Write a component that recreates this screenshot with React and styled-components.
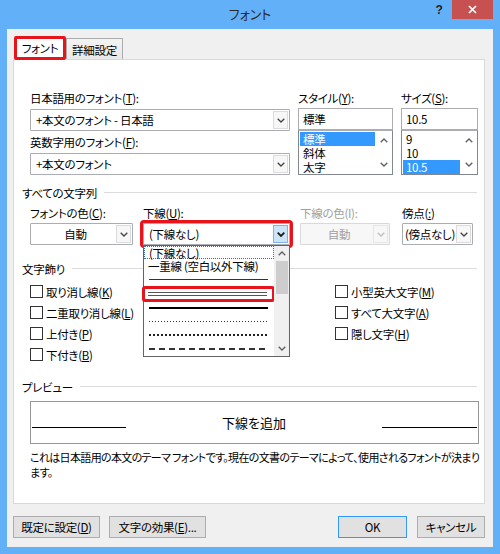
import React from 'react';
import styled, { createGlobalStyle } from 'styled-components';

const GlobalStyle = createGlobalStyle`
    html, body {
        margin: 0;
        padding: 0;
    }
    body {
        font-family: "Noto Sans CJK JP", "Noto Sans", sans-serif;
        font-size: 11.5px;
        letter-spacing: -0.3px;
        font-feature-settings: "palt";
        color: #000;
    }
    * {
        box-sizing: border-box;
    }
`;

const Chevron = ({ up, color = '#444', bold }) => (
    <svg width="8" height="5" viewBox="0 0 8 5">
        <polyline
            points={up ? '0.7,4.3 4,1 7.3,4.3' : '0.7,0.7 4,4 7.3,0.7'}
            fill="none"
            stroke={color}
            strokeWidth={bold ? 1.8 : 1.3}
        />
    </svg>
);

const App = () => {
    const styles = ['標準', '斜体', '太字'];
    const sizes = ['9', '10', '10.5'];
    const decorLeft = [
        ['取り消し線(', 'K', ')'],
        ['二重取り消し線(', 'L', ')'],
        ['上付き(', 'P', ')'],
        ['下付き(', 'B', ')']
    ];
    const decorRight = [
        ['小型英大文字(', 'M', ')'],
        ['すべて大文字(', 'A', ')'],
        ['隠し文字(', 'H', ')']
    ];
    const underlineSamples = ['single', 'double', 'thick', 'dotted', 'thickDotted', 'dashed'];

    return (
        <>
            <GlobalStyle />
            <Window>
                <TitleBar>
                    <span />
                    <Title>フォント</Title>
                    <Controls>
                        <HelpButton>?</HelpButton>
                        <CloseButton>
                            <svg width="9" height="9" viewBox="0 0 9 9">
                                <path d="M1 1 L8 8 M8 1 L1 8" stroke="#fff" strokeWidth="1.7" />
                            </svg>
                        </CloseButton>
                    </Controls>
                </TitleBar>

                <Client>
                    <TabStrip>
                        <Tab $active>フォント</Tab>
                        <Tab>詳細設定</Tab>
                    </TabStrip>

                    <Panel>
                        <FontsRow>
                            <FieldCol $w={260}>
                                <FieldLabel>日本語用のフォント(<u>T</u>):</FieldLabel>
                                <Combo>
                                    <ComboValue>+本文のフォント - 日本語</ComboValue>
                                    <ComboButton><Chevron /></ComboButton>
                                </Combo>
                                <FieldLabel>英数字用のフォント(<u>F</u>):</FieldLabel>
                                <Combo>
                                    <ComboValue>+本文のフォント</ComboValue>
                                    <ComboButton><Chevron /></ComboButton>
                                </Combo>
                            </FieldCol>

                            <FieldCol $w={95} $left={8} $gap={2}>
                                <FieldLabel>スタイル(<u>Y</u>):</FieldLabel>
                                <Picker>
                                    <TextBox>標準</TextBox>
                                    <ListBox>
                                        <ListItems>
                                            {styles.map((s, i) => (
                                                <ListItem key={s} $selected={i === 0}>{s}</ListItem>
                                            ))}
                                        </ListItems>
                                        <ListScroll>
                                            <Chevron up color="#606060" />
                                            <Chevron color="#606060" />
                                        </ListScroll>
                                    </ListBox>
                                </Picker>
                            </FieldCol>

                            <FieldCol $w={77} $left={8} $gap={2}>
                                <FieldLabel>サイズ(<u>S</u>):</FieldLabel>
                                <Picker>
                                    <TextBox>10.5</TextBox>
                                    <ListBox>
                                        <ListItems>
                                            {sizes.map((s, i) => (
                                                <ListItem key={s} $selected={i === 2}>{s}</ListItem>
                                            ))}
                                        </ListItems>
                                        <ListScroll>
                                            <Chevron up color="#606060" />
                                            <Chevron color="#606060" />
                                        </ListScroll>
                                    </ListBox>
                                </Picker>
                            </FieldCol>
                        </FontsRow>

                        <GroupHeader $top={10}>すべての文字列</GroupHeader>
                        <CharRow>
                            <FieldCol $w={103} $gap={2}>
                                <FieldLabel>フォントの色(<u>C</u>):</FieldLabel>
                                <Combo>
                                    <ComboValue $center>自動</ComboValue>
                                    <ComboButton><Chevron /></ComboButton>
                                </Combo>
                            </FieldCol>

                            <FieldCol $w={147} $left={10} $gap={2}>
                                <FieldLabel>下線(<u>U</u>):</FieldLabel>
                                <Combo $focused>
                                    <ComboValue>(下線なし)</ComboValue>
                                    <ComboButton $hot><Chevron color="#1a1a1a" bold /></ComboButton>
                                    <DropList>
                                        <DropItems>
                                            <DropItem $first>(下線なし)</DropItem>
                                            <DropItem>一重線 (空白以外下線)</DropItem>
                                            {underlineSamples.map((k) => (
                                                <DropItem key={k} $marked={k === 'double'}>
                                                    <LineSample $kind={k} />
                                                </DropItem>
                                            ))}
                                        </DropItems>
                                        <DropScroll>
                                            <ScrollArrow><Chevron up color="#606060" /></ScrollArrow>
                                            <ScrollThumb />
                                            <ScrollSpace />
                                            <ScrollArrow><Chevron color="#606060" /></ScrollArrow>
                                        </DropScroll>
                                    </DropList>
                                </Combo>
                            </FieldCol>

                            <FieldCol $w={90} $left={10} $gap={2}>
                                <FieldLabel $disabled>下線の色(I):</FieldLabel>
                                <Combo $disabled>
                                    <ComboValue $center>自動</ComboValue>
                                    <ComboButton $disabled><Chevron color="#C0C0C0" /></ComboButton>
                                </Combo>
                            </FieldCol>

                            <FieldCol $w={71} $left={12} $gap={2}>
                                <FieldLabel>傍点(<u>:</u>)</FieldLabel>
                                <Combo>
                                    <ComboValue $tight>(傍点なし)</ComboValue>
                                    <ComboButton><Chevron /></ComboButton>
                                </Combo>
                            </FieldCol>
                        </CharRow>

                        <GroupHeader $top={16}>文字飾り</GroupHeader>
                        <DecorGrid>
                            {[...decorLeft, ...decorRight].map(([a, k, b]) => (
                                <CheckItem key={a}>
                                    <CheckBox />
                                    <span>{a}<u>{k}</u>{b}</span>
                                </CheckItem>
                            ))}
                        </DecorGrid>

                        <GroupHeader $top={14}>プレビュー</GroupHeader>
                        <PreviewBox>
                            <PreviewLine />
                            <PreviewText>下線を追加</PreviewText>
                            <PreviewLine />
                        </PreviewBox>
                        <Description>
                            これは日本語用の本文のテーマ フォントです。現在の文書のテーマによって、使用されるフォントが決まり<br />ます。
                        </Description>
                    </Panel>

                    <ButtonRow>
                        <Button $w={87}>既定に設定(<u>D</u>)</Button>
                        <Button $w={97}>文字の効果(<u>E</u>)...</Button>
                        <Spacer />
                        <Button $w={69} $default>OK</Button>
                        <Button $w={68} $last>キャンセル</Button>
                    </ButtonRow>
                </Client>
            </Window>
        </>
    );
};

// Window chrome
const Window = styled.div`
    width: 500px;
    height: 554px;
    background: #62b0f7;
    display: flex;
    flex-direction: column;
`;

const TitleBar = styled.div`
    height: 29px;
    display: grid;
    grid-template-columns: 1fr auto 1fr;
    align-items: start;
`;

const Title = styled.div`
    font-size: 13px;
    letter-spacing: 0;
    line-height: 28px;
    color: #2b2b2b;
`;

const Controls = styled.div`
    justify-self: end;
    display: flex;
    align-items: flex-start;
    margin-right: 7px;
`;

const HelpButton = styled.div`
    width: 26px;
    height: 19px;
    line-height: 20px;
    text-align: center;
    font-family: "Liberation Sans", sans-serif;
    font-weight: 700;
    font-size: 12px;
    color: #222;
`;

const CloseButton = styled.div`
    width: 41px;
    height: 19px;
    background: #c75050;
    display: flex;
    align-items: center;
    justify-content: center;
`;

const Client = styled.div`
    flex: 1;
    margin: 0 7px 7px;
    background: #f0f0f0;
    padding: 7px 8px 9px 6px;
    display: flex;
    flex-direction: column;
`;

// Tabs
const TabStrip = styled.div`
    height: 23px;
    display: flex;
    align-items: flex-end;
    padding-left: 1px;
    position: relative;
    z-index: 1;
`;

const Tab = styled.div`
    height: ${(p) => (p.$active ? 24 : 21)}px;
    width: ${(p) => (p.$active ? 52 : 57)}px;
    margin-bottom: ${(p) => (p.$active ? -1 : 0)}px;
    display: flex;
    align-items: center;
    justify-content: center;
    background: ${(p) => (p.$active ? '#fff' : 'linear-gradient(#f3f3f3, #e8e8e8)')};
    border: ${(p) => (p.$active ? '3px solid #e8141b' : '1px solid #acacac')};
    border-bottom: ${(p) => (p.$active ? '3px solid #e8141b' : 'none')};
    border-radius: ${(p) => (p.$active ? '2px' : '0')};
    color: #000;
    padding-top: ${(p) => (p.$active ? 0 : 1)}px;
`;

const Panel = styled.div`
    height: 445px;
    background: #fff;
    border: 1px solid #d9d9d9;
    display: flex;
    flex-direction: column;
`;

// Fields
const FontsRow = styled.div`
    display: flex;
    margin: 30px 0 0 16px;
`;

const CharRow = styled.div`
    display: flex;
    margin: 4px 0 0 16px;
    position: relative;
    z-index: 2;
`;

const FieldCol = styled.div`
    display: flex;
    flex-direction: column;
    gap: ${(p) => p.$gap ?? 3}px;
    width: ${(p) => p.$w}px;
    margin-left: ${(p) => p.$left ?? 0}px;
`;

const FieldLabel = styled.div`
    height: 16px;
    line-height: 16px;
    white-space: nowrap;
    color: ${(p) => (p.$disabled ? '#a0a0a0' : '#000')};
`;

const Combo = styled.div`
    position: relative;
    height: 22px;
    display: flex;
    background: ${(p) => (p.$disabled ? '#f7f7f7' : '#fff')};
    border: 1px solid ${(p) => (p.$disabled ? '#d9d9d9' : '#abadb3')};
    color: ${(p) => (p.$disabled ? '#a0a0a0' : '#000')};
    outline: ${(p) => (p.$focused ? '3px solid #e8141b' : 'none')};
    outline-offset: 0;
    border-radius: 1px;
`;

const ComboValue = styled.div`
    flex: 1;
    display: flex;
    align-items: center;
    justify-content: ${(p) => (p.$center ? 'center' : 'flex-start')};
    padding-left: ${(p) => (p.$tight ? 2 : 5)}px;
    white-space: nowrap;
    overflow: hidden;
`;

const ComboButton = styled.div`
    width: 15px;
    margin: 1px;
    display: flex;
    align-items: center;
    justify-content: center;
    background: ${(p) => (p.$hot ? '#cce4f7' : '#f7f7f7')};
    border: 1px solid ${(p) => (p.$hot ? '#7eb4ea' : p.$disabled ? '#e6e6e6' : '#dcdcdc')};
`;

const Picker = styled.div`
    display: flex;
    flex-direction: column;
`;

const TextBox = styled.div`
    height: 22px;
    border: 1px solid #abadb3;
    padding-left: 4px;
    display: flex;
    align-items: center;
    background: #fff;
`;

const ListBox = styled.div`
    height: 45px;
    display: flex;
    border: 1px solid #828790;
    border-top-color: #abadb3;
    background: #fff;
`;

const ListItems = styled.div`
    flex: 1;
    padding: 1px 1px 0 1px;
`;

const ListItem = styled.div`
    height: 14px;
    line-height: 14px;
    padding-left: 3px;
    background: ${(p) => (p.$selected ? '#3399ff' : 'transparent')};
    color: ${(p) => (p.$selected ? '#fff' : '#000')};
`;

const ListScroll = styled.div`
    width: 16px;
    display: flex;
    flex-direction: column;
    align-items: center;
    justify-content: space-between;
    padding: 7px 0 7px;
`;

// Underline dropdown (opened, lies over the content below)
const DropList = styled.div`
    position: absolute;
    top: calc(100% + 1px);
    left: -1px;
    right: -1px;
    height: 112px;
    display: flex;
    background: #fff;
    border: 1px solid #646464;
    z-index: 5;
`;

const DropItems = styled.div`
    flex: 1;
    display: flex;
    flex-direction: column;
`;

const DropItem = styled.div`
    height: ${(p) => (p.$first ? 13 : 14)}px;
    line-height: ${(p) => (p.$first ? 12 : 14)}px;
    padding: 0 6px 0 4px;
    display: flex;
    align-items: center;
    white-space: nowrap;
    border: ${(p) => (p.$first ? '1px dotted #3a6ea5' : 'none')};
    outline: ${(p) => (p.$marked ? '3px solid #e8141b' : 'none')};
    outline-offset: -2px;
    margin-left: ${(p) => (p.$marked ? -1 : 0)}px;
    border-radius: ${(p) => (p.$marked ? '2px' : '0')};
`;

const lineStyles = {
    single: 'height: 1px; background: #333;',
    double: 'height: 4px; border-top: 1px solid #555; border-bottom: 1px solid #555;',
    thick: 'height: 2px; background: #000;',
    dotted: 'height: 1px; background: repeating-linear-gradient(to right, #333 0 1px, transparent 1px 3px);',
    thickDotted: 'height: 2px; background: repeating-linear-gradient(to right, #222 0 2px, transparent 2px 4px);',
    dashed: 'height: 1.5px; background: repeating-linear-gradient(to right, #333 0 6px, transparent 6px 10px);'
};

const LineSample = styled.div`
    width: 119px;
    margin-left: 1px;
    ${(p) => lineStyles[p.$kind]}
`;

const DropScroll = styled.div`
    width: 16px;
    background: #f0f0f0;
    display: flex;
    flex-direction: column;
    align-items: center;
`;

const ScrollArrow = styled.div`
    height: 15px;
    width: 100%;
    display: flex;
    align-items: center;
    justify-content: center;
`;

const ScrollThumb = styled.div`
    width: 12px;
    height: 33px;
    background: #cdcdcd;
`;

const ScrollSpace = styled.div`
    flex: 1;
`;

// Groups
const GroupHeader = styled.div`
    display: flex;
    align-items: center;
    height: 16px;
    margin: ${(p) => p.$top}px 7px 0 8px;
    white-space: nowrap;

    &::after {
        content: '';
        flex: 1;
        height: 1px;
        background: #dcdcdc;
        margin-left: 7px;
        transform: translateY(-1px);
    }
`;

const DecorGrid = styled.div`
    display: grid;
    grid-template-columns: 305px 1fr;
    grid-template-rows: repeat(4, 21px);
    grid-auto-flow: column;
    margin: 4px 0 0 16px;
`;

const CheckItem = styled.div`
    display: flex;
    align-items: center;
    gap: 3px;
    white-space: nowrap;
`;

const CheckBox = styled.div`
    width: 13px;
    height: 13px;
    border: 1px solid #333;
    background: #fff;
`;

// Preview
const PreviewBox = styled.div`
    height: 43px;
    margin: 6px 5px 0 16px;
    border: 1px solid #969696;
    display: grid;
    grid-template-columns: 94px 1fr 95px;
    align-items: center;
    padding: 0 1px;
`;

const PreviewLine = styled.div`
    height: 1px;
    background: #000;
    margin-top: 10px;
`;

const PreviewText = styled.div`
    text-align: center;
    font-size: 13px;
    letter-spacing: 0;
`;

const Description = styled.div`
    margin: 6px 4px 0 16px;
    font-size: 11px;
    line-height: 15px;
    letter-spacing: -0.65px;
    white-space: nowrap;
`;

// Bottom buttons
const ButtonRow = styled.div`
    display: flex;
    gap: 9px;
    margin-top: 12px;
`;

const Spacer = styled.div`
    flex: 1;
`;

const Button = styled.div`
    width: ${(p) => p.$w}px;
    height: 22px;
    margin-left: ${(p) => (p.$last ? 1 : 0)}px;
    display: flex;
    align-items: center;
    justify-content: center;
    background: #e1e1e1;
    border: 1px solid ${(p) => (p.$default ? '#3399ff' : '#adadad')};
    white-space: nowrap;
`;

export default App;
